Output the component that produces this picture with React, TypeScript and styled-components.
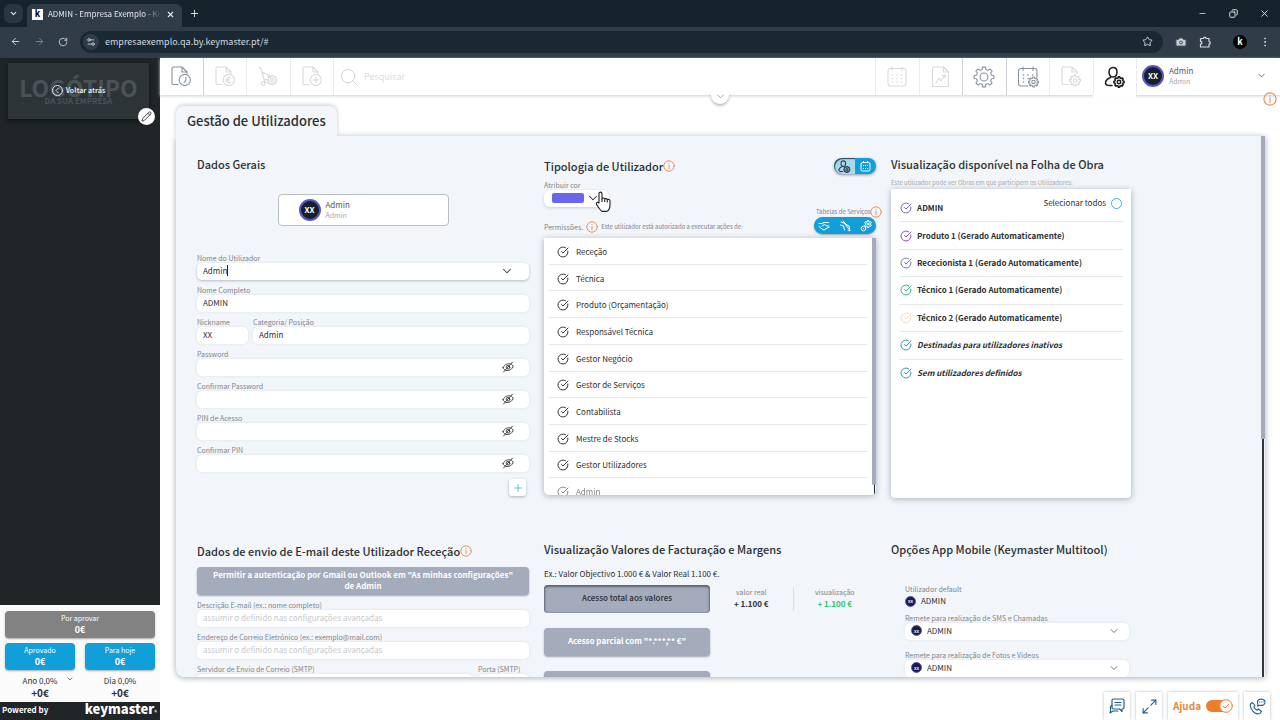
import { ReactNode, useState } from "react";
import styled, { createGlobalStyle, css } from "styled-components";
import {
  ArrowLeft, ArrowRight, Camera, ChevronDown, CircleCheckBig, Copy, EllipsisVertical,
  Maximize2, Minus, Pencil, Plus, RotateCw, Search, Settings2, Star, X,
} from "lucide-react";

const color = {
  text: "#2b2f33",
  label: "#7d838a",
  muted: "#a3a8ae",
  line: "#e6e8ea",
  blue: "#119fda",
  navy: "#1f5f8f",
  orange: "#e8925f",
  gray: "#a4abbb",
  panel: "#f2f6fa",
  black: "#202528",
};

const permissions = [
  "Receção",
  "Técnica",
  "Produto (Orçamentação)",
  "Responsável Técnica",
  "Gestor Negócio",
  "Gestor de Serviços",
  "Contabilista",
  "Mestre de Stocks",
  "Gestor Utilizadores",
  "Admin",
];

const viewers = [
  { name: "ADMIN", tint: "#6c69b5" },
  { name: "Produto 1 (Gerado Automaticamente)", tint: "#9450a8" },
  { name: "Rececionista 1 (Gerado Automaticamente)", tint: "#7276c4" },
  { name: "Técnico 1 (Gerado Automaticamente)", tint: "#2fb98c" },
  { name: "Técnico 2 (Gerado Automaticamente)", tint: "#f0dcc2" },
  { name: "Destinadas para utilizadores inativos", tint: "#2a9fb0", italic: true },
  { name: "Sem utilizadores definidos", tint: "#2a9fb0", italic: true },
];

const secrets = ["Password", "Confirmar Password", "PIN de Acesso", "Confirmar PIN"];

/* ---------- icons ---------- */

const gear = (cx: number, cy: number, outer: number, inner: number, teeth = 8) => {
  const step = (Math.PI * 2) / teeth;
  const points: string[] = [];
  for (let i = 0; i < teeth; i++) {
    const a = i * step - Math.PI / 2;
    [[-0.3, inner], [-0.2, outer], [0.2, outer], [0.3, inner]].forEach(([k, r]) => {
      points.push(`${(cx + Math.cos(a + k * step) * r).toFixed(2)} ${(cy + Math.sin(a + k * step) * r).toFixed(2)}`);
    });
  }
  return `M${points.join("L")}Z`;
};

const Svg = ({ w, h, vb, children, sw = 1 }: { w: number; h: number; vb?: string; children: ReactNode; sw?: number }) => (
  <svg width={w} height={h} viewBox={vb ?? `0 0 ${w} ${h}`} fill="none" stroke="currentColor" strokeWidth={sw}
    strokeLinecap="round" strokeLinejoin="round" aria-hidden="true">
    {children}
  </svg>
);

const DocIcon = ({ kind }: { kind: "clock" | "euro" | "plus" | "gear" }) => (
  <Svg w={20} h={21} sw={1.1}>
    <path d="M7 18.5H2.2A1.2 1.2 0 0 1 1 17.3V2.2A1.2 1.2 0 0 1 2.2 1H11l5 5v1.5M11 1v5h5" />
    {kind === "gear" ? (
      <>
        <path d={gear(14, 14.5, 5.5, 4.2)} />
        <circle cx="14" cy="14.5" r="1.8" />
      </>
    ) : (
      <circle cx="13.8" cy="14" r="5.6" />
    )}
    {kind === "clock" && <path d="M14.8 11.2v3.3L13 16.3" />}
    {kind === "euro" && <path d="M15.8 12a2.6 2.6 0 1 0 0 4.2M11 13.5h3M11 14.8h3" />}
    {kind === "plus" && <path d="M13.8 11v6M10.8 14h6" />}
  </Svg>
);

const CartIcon = () => (
  <Svg w={20} h={21} sw={1.1}>
    <path d="M1 1.5 3 2.5l4 14M4.5 8l1-1.5 2 1.500 4.500 1.500.5 2M6 14l3-.5M9 16.500H7" />
    <circle cx="5" cy="17.5" r="1.800" />
    <path d={gear(14, 14, 4.8, 3.7)} />
    <circle cx="14" cy="14" r="1.6" />
  </Svg>
);

const CalendarIcon = ({ withGear }: { withGear?: boolean }) => (
  <Svg w={22} h={22} sw={1.1}>
    <path d={withGear
      ? "M10.500 20H4a2.500 2.500 0 0 1-2.500-2.500V5A2.500 2.500 0 0 1 4 2.500h13.500A2.500 2.500 0 0 1 20 5v6"
      : "M4.500 2.500h13A2.500 2.500 0 0 1 20 5v12.500a2.500 2.500 0 0 1-2.500 2.500h-13A2.500 2.500 0 0 1 2 17.500V5a2.500 2.500 0 0 1 2.500-2.500Z"} />
    <path d="M6 1v3.500M16 1v3.500" />
    <path strokeWidth="1.6" d="M6.500 9h.1M11 9h.1M15.500 9h.1M6.500 12.500h.1M11 12.500h.1M6.500 16h.1" />
    {withGear ? (
      <>
        <path d={gear(16.5, 16, 5, 3.9)} />
        <circle cx="16.5" cy="16" r="1.7" />
      </>
    ) : (
      <path strokeWidth="1.6" d="M15.500 12.500h.1M11 16h.1M15.500 16h.1" />
    )}
  </Svg>
);

const ReportIcon = () => (
  <Svg w={20} h={22} sw={1.1}>
    <path d="M2.5 1h10l5 5v13.500a1 1 0 0 1-1 1h-14a1 1 0 0 1-1-1V2a1 1 0 0 1 1-1ZM12.500 1v5h5M5 17l3-5 2 3 4-6M11 9.500l3-.5.5 3" />
  </Svg>
);

const GearIcon = () => (
  <Svg w={22} h={22} sw={1.1}>
    <path d={gear(11, 11, 10, 7.7)} />
    <circle cx="11" cy="11" r="4" />
  </Svg>
);

const UserGearIcon = ({ size = 22, sw = 1.5 }: { size?: number; sw?: number }) => (
  <Svg w={size} h={size} vb="0 0 22 22" sw={sw}>
    <path d="M9 1.500c2.600 0 4 1.900 4 4.600S11.500 11 9 11 5 8.800 5 6.100 6.400 1.500 9 1.500ZM6.500 11.500C3 13 1.500 14 1.500 17c0 1.600 1.500 2.500 4.500 2.500h2" />
    <path d={gear(15, 16, 5.2, 4.1)} />
    <circle cx="15" cy="16" r="1.7" />
  </Svg>
);

const EyeOffIcon = () => (
  <Svg w={12} h={12}>
    <path d="M1 6.500C2.500 3.500 5 2.500 7.500 2.800c1.600.2 3 .8 3.700 2.200C10.500 8 8 9.500 5 9.500 3 9.500 1.500 8.500 1 6.500Z" />
    <circle cx="6" cy="6.2" r="1.8" />
    <path d="M10.500 1 1.500 11" />
  </Svg>
);

const InfoIcon = ({ size = 12 }: { size?: number }) => (
  <Svg w={size} h={size} vb="0 0 12 12">
    <circle cx="6" cy="6" r="5.200" />
    <path d="M6 5.300v3.400M6 3.300v.2" />
  </Svg>
);

const PuzzleIcon = () => (
  <Svg w={12} h={12} sw={1.2}>
    <path d="M1.500 2.500h3a1.300 1.300 0 0 1 2.600 0h2.900v3a1.300 1.300 0 0 1 0 2.600v2.900H1.500V8.200a1.400 1.400 0 0 0 0-2.800Z" />
  </Svg>
);

const ChatIcon = () => (
  <Svg w={16} h={16} sw={1.2}>
    <path d="M4.500 1h9A1.500 1.500 0 0 1 15 2.500v7a1.500 1.500 0 0 1-1.500 1.500H13v2.500L10.500 11h-6A1.500 1.500 0 0 1 3 9.500v-7A1.500 1.500 0 0 1 4.500 1Z" />
    <path d="M6 4.500h6M6 7h6M3 7.500l-1.500 1v4L1 15l3-2h5" />
  </Svg>
);

const PhoneIcon = () => (
  <Svg w={17} h={17} sw={1.1}>
    <path d="M1.500 6 3.500 4.500l2.500 3L4.800 9c.5 1.500 1.700 2.700 3.200 3.200L9.500 11l3 2.500-1.500 2c-2 .8-5 0-7-2.200S.8 8 1.500 6Z" />
    <path d="M8.500 8 9 6.300C7.500 4 9 1.200 12 1c2.500 0 4.200 1.500 4 3.500-.2 2.200-2.500 3.300-5 2.700ZM10.500 4h.1M12.300 4h.1M14.100 4h.1" />
  </Svg>
);

const HandIcon = () => (
  <svg width="18" height="22" viewBox="0 0 18 22" fill="#fff" stroke="#222" strokeWidth="1.1" strokeLinejoin="round" aria-hidden="true">
    <path d="M5 12V2.500C5 .700 8 .700 8 2.500V8c.5-1.500 2.500-1.200 2.700.3.600-1.200 2.500-.8 2.600.6.800-1 2.700-.6 2.700 1v4c0 3.500-1.500 5.500-3 6.500H8c-2-1-3-3.500-5.500-7-.9-1.800 1.200-2.600 2.500-1.400Z" />
    <path d="M8 8v3M10.700 8.500V11M13.300 9.300V11.500" />
  </svg>
);

const HandshakeIcon = () => (
  <Svg w={12} h={12}>
    <path d="M1 3.500h3l2-1h4.500M1 6.500l3 2.500 2 1 4-2.500h1M4 6l2.500-1.500L9 6h2" />
  </Svg>
);

const ToolsIcon = () => (
  <Svg w={12} h={12}>
    <path d="m2 2 3 1 5 6M4 1l4 4M1.500 5l3 1 1 4M6 4l4 2 1 5-2-1" />
  </Svg>
);

const GearsIcon = () => (
  <Svg w={12} h={12}>
    <path d={gear(8, 4, 3.5, 2.6, 6)} />
    <circle cx="8" cy="4" r="1" />
    <circle cx="3.5" cy="8.5" r="2.3" />
    <path d="M3.500 8.500h.1" />
  </Svg>
);

/* ---------- page ---------- */

const App = () => (
  <Page>
    <GlobalStyle />
    <Browser />
    <Body>
      <Sidebar />
      <Main>
        <TopBar />
        <TabTitle>Gestão de Utilizadores</TabTitle>
        <Panel>
          <PanelGrid>
            <GeneralData />
            <UserType />
            <SheetVisibility />
            <EmailData />
            <Billing />
            <MobileOptions />
          </PanelGrid>
          <ScrollTrack />
        </Panel>
        <Footer />
      </Main>
    </Body>
  </Page>
);

const Browser = () => (
  <>
    <TabStrip>
      <TabSearch aria-label="Pesquisar separadores"><ChevronDown size={9} strokeWidth={3} /></TabSearch>
      <BrowserTab>
        <Favicon>k</Favicon>
        <span>ADMIN - Empresa Exemplo - Keymaster</span>
        <X size={9} strokeWidth={3} />
      </BrowserTab>
      <ChromeButton aria-label="Novo separador"><Plus size={11} /></ChromeButton>
      <WindowButtons>
        <ChromeButton aria-label="Minimizar"><Minus size={9} /></ChromeButton>
        <ChromeButton aria-label="Restaurar"><Restore><Copy size={9} strokeWidth={2.5} /></Restore></ChromeButton>
        <ChromeButton aria-label="Fechar"><X size={11} /></ChromeButton>
      </WindowButtons>
    </TabStrip>
    <AddressRow>
      <ChromeButton aria-label="Retroceder"><ArrowLeft size={11} /></ChromeButton>
      <ChromeButton aria-label="Avançar" $dim><ArrowRight size={11} /></ChromeButton>
      <ChromeButton aria-label="Recarregar"><RotateCw size={10} /></ChromeButton>
      <AddressBar>
        <SiteInfo><Settings2 size={10} /></SiteInfo>
        <input aria-label="Endereço" defaultValue="empresaexemplo.qa.by.keymaster.pt/#" />
        <Star size={11} />
      </AddressBar>
      <ChromeIcons>
        <Camera size={12} fill="#c9ced2" color="#4a555e" />
        <PuzzleIcon />
        <BrandDot>k</BrandDot>
        <EllipsisVertical size={12} />
      </ChromeIcons>
    </AddressRow>
  </>
);

const Sidebar = () => (
  <Side>
    <LogoCard>
      <strong>LOGÓTIPO</strong>
      <small>DA SUA EMPRESA</small>
      <BackButton>
        <Svg w={11} h={11}><circle cx="5.500" cy="5.500" r="5" /><path d="M6.500 3 4 5.500 6.500 8" /></Svg>
        Voltar atrás
      </BackButton>
      <EditButton aria-label="Editar logótipo"><Pencil size={11} strokeWidth={2} /></EditButton>
    </LogoCard>
    <Totals>
      <TotalButton $wide>Por aprovar<b>0€</b></TotalButton>
      <TotalButton>Aprovado<b>0€</b></TotalButton>
      <TotalButton>Para hoje<b>0€</b></TotalButton>
      <Delta><span>Ano 0,0%<ChevronDown size={8} /></span><b>+0€</b></Delta>
      <Delta><span>Dia 0,0%</span><b>+0€</b></Delta>
    </Totals>
    <Powered>Powered by<strong>keymaster<i>®</i></strong></Powered>
  </Side>
);

const UserBadge = () => (
  <Badge>
    <Avatar>XX</Avatar>
    <div>Admin<small>Admin</small></div>
  </Badge>
);

const TopBar = () => (
  <Bar>
    <ToolGroup $columns={4}>
      <Tool aria-label="Histórico" $on><DocIcon kind="clock" /></Tool>
      <Tool aria-label="Orçamentos"><DocIcon kind="euro" /></Tool>
      <Tool aria-label="Stocks"><CartIcon /></Tool>
      <Tool aria-label="Nova obra"><DocIcon kind="plus" /></Tool>
    </ToolGroup>
    <SearchBox>
      <Search size={20} strokeWidth={1.2} />
      <input aria-label="Pesquisar" placeholder="Pesquisar" />
    </SearchBox>
    <ToolGroup $columns={6}>
      <Tool aria-label="Calendário" $end><CalendarIcon /></Tool>
      <Tool aria-label="Relatórios" $end><ReportIcon /></Tool>
      <Tool aria-label="Configurações" $end $on><GearIcon /></Tool>
      <Tool aria-label="Configurar calendário" $end $on><CalendarIcon withGear /></Tool>
      <Tool aria-label="Configurar documentos" $end><DocIcon kind="gear" /></Tool>
      <Tool aria-label="Utilizadores" $end $active><UserGearIcon /></Tool>
    </ToolGroup>
    <Account>
      <UserBadge />
      <ChevronDown size={11} strokeWidth={1.5} />
    </Account>
    <PullTab aria-label="Expandir"><ChevronDown size={11} strokeWidth={1.8} /></PullTab>
    <PageInfo aria-label="Informação"><InfoIcon size={14} /></PageInfo>
  </Bar>
);

const GeneralData = () => (
  <section>
    <Title>Dados Gerais</Title>
    <UserCard><UserBadge /></UserCard>
    <Fields>
      <Field>
        <span>Nome do Utilizador</span>
        <Box $focus>
          <GrowInput defaultValue="Admin" />
          <Caret />
          <ChevronDown size={14} strokeWidth={1.8} />
        </Box>
      </Field>
      <Field>
        <span>Nome Completo</span>
        <Box><input defaultValue="ADMIN" /></Box>
      </Field>
      <FieldRow>
        <Field $width={51}>
          <span>Nickname</span>
          <Box><input defaultValue="XX" /></Box>
        </Field>
        <Field>
          <span>Categoria/ Posição</span>
          <Box><input defaultValue="Admin" /></Box>
        </Field>
      </FieldRow>
      {secrets.map((label) => (
        <Field key={label}>
          <span>{label}</span>
          <Box>
            <input type="password" />
            <EyeOffIcon />
          </Box>
        </Field>
      ))}
    </Fields>
    <AddButton aria-label="Adicionar"><Plus size={12} strokeWidth={1.8} /></AddButton>
  </section>
);

const UserType = () => {
  const [checked, setChecked] = useState<string[]>(permissions);
  const toggle = (name: string) =>
    setChecked((list) => (list.includes(name) ? list.filter((n) => n !== name) : [...list, name]));

  return (
    <section>
      <TitleRow>
        <Title>Tipologia de Utilizador</Title>
        <InfoIcon />
        <ModeSwitch>
          <button aria-label="Utilizador" aria-pressed="true"><UserGearIcon size={13} sw={1.8} /></button>
          <button aria-label="Calendário">
            <Svg w={11} h={11}>
              <rect x="1" y="1.500" width="9" height="8.500" rx="1.500" />
              <path d="M3.500.5v1M7.500.5v1M3.500 4.500h.1M5.500 4.500h.1M7.500 4.500h.1M3.500 7.500h.1M5.500 7.500h.1M7.500 7.500h.1" />
            </Svg>
          </button>
        </ModeSwitch>
      </TitleRow>
      <Tools>
        <div>
          <ColorField>
            <span id="cor">Atribuir cor</span>
            <ColorButton aria-labelledby="cor">
              <i />
              <ChevronDown size={14} strokeWidth={1.8} />
            </ColorButton>
            <Pointer><HandIcon /></Pointer>
          </ColorField>
          <Hint>Permissões. <InfoIcon /> <small>Este utilizador está autorizado a executar ações de:</small></Hint>
        </div>
        <ServiceTables>
          <span>Tabelas de Serviços<InfoIcon /></span>
          <ServicePill>
            <button aria-label="Serviços"><HandshakeIcon /></button>
            <button aria-label="Mão de obra"><ToolsIcon /></button>
            <button aria-label="Peças"><GearsIcon /></button>
          </ServicePill>
        </ServiceTables>
      </Tools>
      <PermissionCard>
        <PermissionList>
          {permissions.map((name) => (
            <li key={name}>
              <CheckLabel>
                <input type="checkbox" checked={checked.includes(name)} onChange={() => toggle(name)} />
                <CircleCheckBig size={12} />
                {name}
              </CheckLabel>
            </li>
          ))}
        </PermissionList>
        <ListTrack />
      </PermissionCard>
    </section>
  );
};

const SheetVisibility = () => (
  <section>
    <Title>Visualização disponível na Folha de Obra</Title>
    <Note>Este utilizador pode ver Obras em que participem os Utilizadores:</Note>
    <ViewerCard>
      <ViewerList>
        {viewers.map((viewer, i) => (
          <li key={viewer.name}>
            <CheckLabel $tint={viewer.tint} $bold $italic={viewer.italic}>
              <input type="checkbox" defaultChecked />
              <CircleCheckBig size={12} />
              {viewer.name}
            </CheckLabel>
            {i === 0 && (
              <SelectAll>Selecionar todos<input type="checkbox" /></SelectAll>
            )}
          </li>
        ))}
      </ViewerList>
    </ViewerCard>
  </section>
);

const EmailData = () => (
  <section>
    <TitleRow>
      <Title>Dados de envio de E-mail deste Utilizador Receção</Title>
      <InfoIcon />
    </TitleRow>
    <AuthButton>Permitir a autenticação por Gmail ou Outlook em "As minhas configurações" de Admin</AuthButton>
    <Fields>
      <Field>
        <span>Descrição E-mail (ex.: nome completo)</span>
        <Box><input placeholder="assumir o definido nas configurações avançadas" /></Box>
      </Field>
      <Field>
        <span>Endereço de Correio Eletrónico (ex.: exemplo@mail.com)</span>
        <Box><input placeholder="assumir o definido nas configurações avançadas" /></Box>
      </Field>
      <FieldRow>
        <Field>
          <span>Servidor de Envio de Correio (SMTP)</span>
          <Box><input /></Box>
        </Field>
        <Field $width={51}>
          <span>Porta (SMTP)</span>
          <Box><input /></Box>
        </Field>
      </FieldRow>
    </Fields>
  </section>
);

const Billing = () => (
  <section>
    <Title>Visualização Valores de Facturação e Margens</Title>
    <Example>Ex.: Valor Objectivo 1.000 € &amp; Valor Real 1.100 €.</Example>
    <AccessRows>
      <AccessRow>
        <AccessButton $pressed>Acesso total aos valores</AccessButton>
        <Value>valor real<b>+ 1.100 €</b></Value>
        <Value $green>visualização<b>+ 1.100 €</b></Value>
      </AccessRow>
      <AccessRow><AccessButton>Acesso parcial com "*.***,** €"</AccessButton></AccessRow>
      <AccessRow><AccessButton aria-label="Sem acesso" /></AccessRow>
    </AccessRows>
  </section>
);

const MobileOptions = () => (
  <section>
    <Title>Opções App Mobile (Keymaster Multitool)</Title>
    <MobileFields>
      <DefaultUser>
        <span>Utilizador default</span>
        <div><Avatar $small>XX</Avatar>ADMIN</div>
      </DefaultUser>
      {["Remete para realização de SMS e Chamadas", "Remete para realização de Fotos e Videos"].map((label) => (
        <Field key={label}>
          <span>{label}</span>
          <Box $select>
            <Avatar $small>XX</Avatar>
            <select><option>ADMIN</option></select>
            <ChevronDown size={12} strokeWidth={1.5} />
          </Box>
        </Field>
      ))}
    </MobileFields>
  </section>
);

const Footer = () => (
  <Foot>
    <FootButton aria-label="Mensagens"><ChatIcon /></FootButton>
    <FootButton aria-label="Ecrã inteiro"><Maximize2 size={17} strokeWidth={1.6} /></FootButton>
    <Help>
      Ajuda
      <input type="checkbox" defaultChecked />
      <Svg w={27} h={14}>
        <rect x="0" y="1" width="26" height="12" rx="6" fill="#ee7d30" stroke="none" />
        <circle cx="20" cy="7" r="6.3" fill="#fff" stroke="#ee7d30" />
        <path d="m17 7 2 2 4-4" stroke="#ee7d30" />
      </Svg>
    </Help>
    <FootButton aria-label="Contactos"><PhoneIcon /></FootButton>
  </Foot>
);

/* ---------- styles ---------- */

const GlobalStyle = createGlobalStyle`
  * { box-sizing: border-box; }
  body {
    margin: 0;
    background: #fff;
    color: ${color.text};
    font: 9px/12px "Noto Sans CJK SC", "Noto Sans", sans-serif;
  }
  button, input, select { font: inherit; color: inherit; border: 0; padding: 0; background: none; }
  input, select { min-width: 0; outline: 0; appearance: none; }
  button { cursor: pointer; }
  svg { display: block; flex: none; }
`;

const center = css`
  display: flex;
  align-items: center;
  justify-content: center;
`;

const Page = styled.div`
  height: 100vh;
  display: flex;
  flex-direction: column;
  overflow: hidden;
`;

const Body = styled.div`
  flex: 1;
  min-height: 0;
  display: flex;
`;

const TabStrip = styled.div`
  display: flex;
  align-items: center;
  height: 27px;
  padding-left: 4px;
  background: #14232c;
  color: #e3e8eb;
`;

const TabSearch = styled.button`
  ${center}
  width: 19px;
  height: 19px;
  border-radius: 6px;
  background: #2a3640;
`;

const BrowserTab = styled.div`
  display: flex;
  align-items: center;
  align-self: flex-end;
  gap: 5px;
  width: 155px;
  height: 23px;
  margin-left: 4px;
  padding: 0 7px 3px 5px;
  border-radius: 6px 6px 0 0;
  background: #303d49;
  font-size: 8px;

  span {
    flex: 1;
    overflow: hidden;
    white-space: nowrap;
    mask-image: linear-gradient(90deg, #000 85%, transparent);
  }
`;

const Favicon = styled.b`
  ${center}
  width: 11px;
  height: 11px;
  background: #fff;
  color: #000;
  font-size: 9px;
`;

const ChromeButton = styled.button<{ $dim?: boolean }>`
  ${center}
  width: 24px;
  height: 24px;
  opacity: ${({ $dim }) => ($dim ? 0.45 : 1)};
`;

const Restore = styled.span`
  transform: rotate(90deg) scaleX(-1) rotate(90deg);
`;

const WindowButtons = styled.div`
  display: flex;
  gap: 7px;
  margin-left: auto;
  padding-right: 4px;
`;

const AddressRow = styled.div`
  display: flex;
  align-items: center;
  height: 31px;
  padding: 0 0 2px 3px;
  background: #303d49;
  color: #d3dade;
`;

const AddressBar = styled.div`
  flex: 1;
  display: flex;
  align-items: center;
  gap: 6px;
  height: 22px;
  margin-left: 5px;
  padding: 0 10px 0 3px;
  border-radius: 11px;
  background: #1a2833;

  input { flex: 1; }
`;

const SiteInfo = styled.span`
  ${center}
  width: 16px;
  height: 16px;
  border-radius: 50%;
  background: #303d49;
`;

const ChromeIcons = styled.div`
  display: flex;
  align-items: center;
  gap: 12px;
  padding: 0 9px 0 12px;
`;

const BrandDot = styled.b`
  ${center}
  width: 14px;
  height: 14px;
  margin-left: 10px;
  border-radius: 50%;
  background: #000;
  color: #fff;
`;

const Side = styled.aside`
  width: 160px;
  display: flex;
  flex-direction: column;
  justify-content: space-between;
  background: ${color.black};
`;

const LogoCard = styled.div`
  position: relative;
  display: flex;
  flex-direction: column;
  align-items: center;
  margin: 5px 11px 0 8px;
  padding: 15px 0 14px;
  background: #2d3438;
  color: #4b5257;
  box-shadow: 0 2px 4px #111;

  strong { font-size: 23px; line-height: 19px; }
  small { font-size: 8px; line-height: 8px; font-weight: 700; }
`;

const BackButton = styled.button`
  ${center}
  position: absolute;
  inset: 0;
  gap: 3px;
  width: 100%;
  padding-bottom: 2px;
  color: #dfe6ea;
  font-size: 7px;
  font-weight: 700;
`;

const EditButton = styled.button`
  ${center}
  position: absolute;
  right: -6px;
  bottom: -6px;
  width: 17px;
  height: 17px;
  border-radius: 50%;
  background: #fff;
  color: #333;
`;

const Totals = styled.div`
  display: grid;
  grid-template-columns: 1fr 1fr;
  gap: 5px 10px;
  margin-top: auto;
  padding: 6px 5px 3px;
  background: #fbfbfc;
`;

const TotalButton = styled.button<{ $wide?: boolean }>`
  grid-column: ${({ $wide }) => ($wide ? "span 2" : "auto")};
  height: 27px;
  padding-bottom: 2px;
  border-radius: 4px;
  background: ${({ $wide }) => ($wide ? "#828282" : color.blue)};
  box-shadow: 0 1px 2px #0005;
  color: #fff;
  font-size: 7px;
  line-height: 12px;

  b { display: block; font-size: 9px; }
`;

const Delta = styled.div`
  display: flex;
  flex-direction: column;
  align-items: center;
  font-size: 8px;
  line-height: 12px;

  span { position: relative; line-height: 11px; }
  svg { position: absolute; left: 43px; top: 0; }
  b { font-size: 10px; line-height: 13px; }
`;

const Powered = styled.div`
  display: flex;
  align-items: center;
  justify-content: space-between;
  height: 18px;
  padding: 0 3px 2px 2px;
  background: ${color.black};
  color: #fff;
  font-size: 8px;
  font-weight: 700;

  strong { font-size: 13px; }
  i { font-size: 5px; font-style: normal; }
`;

const Main = styled.main`
  flex: 1;
  min-width: 0;
  display: flex;
  flex-direction: column;
`;

const Bar = styled.header`
  position: relative;
  display: flex;
  height: 37px;
  margin-bottom: 11px;
  box-shadow: 0 1px 3px #c9cdd4;
`;

const ToolGroup = styled.div<{ $columns: number }>`
  display: grid;
  grid-template-columns: repeat(${({ $columns }) => $columns}, 1fr);
  width: ${({ $columns }) => ($columns === 4 ? 174 : 261)}px;
`;

const Tool = styled.button<{ $on?: boolean; $active?: boolean; $end?: boolean }>`
  ${center}
  border: 0 solid ${({ $on }) => ($on ? "#cfd3d9" : "#e9ebee")};
  border-width: ${({ $end }) => ($end ? "0 0 0 1px" : "0 1px 0 0")};
  color: ${({ $on, $active }) => ($active ? "#1c1c1c" : $on ? "#87939f" : "#d6d9dd")};
  background: #fff;
  box-shadow: ${({ $active }) => ($active ? "0 3px 0 #fff" : "none")};
`;

const SearchBox = styled.div`
  flex: 1;
  display: flex;
  align-items: center;
  gap: 5px;
  padding-left: 5px;
  color: #cfd3d7;

  input { flex: 1; line-height: 14px; }
  input::placeholder { color: #d9dcdf; }
`;

const Account = styled.div`
  display: flex;
  align-items: center;
  justify-content: space-between;
  width: 144px;
  padding: 0 13px 2px 5px;
  border-left: 1px solid #e9ebee;
`;

const Badge = styled.div`
  display: flex;
  align-items: center;
  gap: 5px;
  color: #55595e;
  font-size: 8px;
  line-height: 11px;

  small { display: block; font-size: 7px; color: ${color.muted}; }
`;

const Avatar = styled.b<{ $small?: boolean }>`
  ${center}
  flex: none;
  width: ${({ $small }) => ($small ? 11 : 22)}px;
  height: ${({ $small }) => ($small ? 11 : 22)}px;
  border: ${({ $small }) => ($small ? 1 : 2)}px solid #5a55c4;
  border-radius: 50%;
  background: ${({ $small }) => ($small ? "#1b1b48" : "#16202c")};
  color: #fff;
  font-size: ${({ $small }) => ($small ? 4 : 8)}px;
  line-height: 8px;
`;

const PullTab = styled.button`
  ${center}
  position: absolute;
  top: 28px;
  left: 50%;
  width: 18px;
  height: 18px;
  margin-left: -9px;
  border-radius: 50%;
  background: #fff;
  box-shadow: 0 2px 3px #b9bec6;
  clip-path: inset(8px -4px -6px -4px);
  padding-top: 3px;
  color: #888f96;
`;

const PageInfo = styled.button`
  position: absolute;
  right: 3px;
  top: 34px;
  color: ${color.orange};
`;

const TabTitle = styled.h1`
  align-self: flex-start;
  z-index: 1;
  margin: 0 0 0 16px;
  padding: 6px 11px 6px;
  border-radius: 8px 8px 0 0;
  background: ${color.panel};
  box-shadow: 0 -1px 4px #c3c9d2;
  clip-path: inset(-6px -6px 0 -6px);
  font-size: 13px;
  line-height: 18px;
  font-weight: 500;
`;

const Panel = styled.div`
  flex: 1;
  min-height: 0;
  display: flex;
  margin: 0 15px 0 16px;
  border-radius: 0 0 0 8px;
  background: ${color.panel};
  box-shadow: 0 1px 6px #a5adba;
`;

const PanelGrid = styled.div`
  flex: 1;
  display: grid;
  grid-template-columns: repeat(3, minmax(0, 332px));
  align-content: start;
  gap: 43px 15px;
  padding: 20px 0 0 21px;
  overflow: hidden;
`;

const ScrollTrack = styled.div`
  width: 4px;
  background:
    linear-gradient(${color.gray}, ${color.gray}) 0 0 / 4px 56% no-repeat,
    linear-gradient(#33363a, #33363a) 1px 0 / 2px 100% no-repeat;
`;

const Title = styled.h2`
  margin: 0;
  padding-bottom: 2px;
  font-size: 11px;
  line-height: 16px;
  font-weight: 500;
  white-space: nowrap;
`;

const TitleRow = styled.div`
  display: flex;
  align-items: center;
  height: 22px;

  > svg { margin-bottom: 2px; color: ${color.orange}; }
`;

const ModeSwitch = styled.div`
  display: flex;
  margin: 0 0 2px auto;
  border-radius: 8px;
  overflow: hidden;
  background: ${color.blue};
  box-shadow: 0 1px 3px #0006;
  color: #fff;

  button { ${center} width: 21px; height: 16px; }
  button:first-child {
    background: #a9d8ee;
    color: #2b4452;
    border-radius: 8px 0 0 8px;
    box-shadow: inset 1px 1px 1px #23404f;
  }
`;

const UserCard = styled.div`
  width: 171px;
  height: 32px;
  margin: 20px auto 27px;
  padding: 4px 20px;
  border: 1px solid #b9bec6;
  border-radius: 4px;
  background: #fff;
`;

const Fields = styled.div`
  display: flex;
  flex-direction: column;
  gap: 5px;
`;

const FieldRow = styled.div`
  display: flex;
  gap: 5px;
`;

const Field = styled.label<{ $width?: number }>`
  display: block;
  flex: ${({ $width }) => ($width ? `0 0 ${$width}px` : "1 1 auto")};
  min-width: 0;

  > span {
    display: block;
    color: ${color.label};
    font-size: 7px;
    line-height: 10px;
    white-space: nowrap;
  }
`;

const Box = styled.div<{ $focus?: boolean; $select?: boolean }>`
  display: flex;
  align-items: center;
  height: 17px;
  padding: 0 ${({ $select }) => ($select ? 9 : 15)}px 2px 6px;
  border-radius: 5px;
  background: #fff;
  box-shadow: ${({ $focus }) => ($focus ? "0 1px 3px #b4bac4" : "0 0 3px #dde1e7")};
  color: #44484d;

  input, select { flex: 1; width: 0; height: 15px; color: ${color.text}; font-size: 8px; line-height: 15px; }
  input::placeholder { color: #c6c9cc; }
  ${Avatar} + select { margin-left: 5px; }
`;

const GrowInput = styled.input`
  && { flex: none; width: auto; field-sizing: content; }
`;

const Caret = styled.i`
  width: 1px;
  height: 11px;
  margin-right: auto;
  background: #222;
`;

const AddButton = styled.button`
  ${center}
  width: 17px;
  height: 17px;
  margin: 7px 3px 0 auto;
  border-radius: 3px;
  background: #fff;
  box-shadow: 0 1px 3px #a9b0bb;
  color: #4cc0c4;
`;

const Tools = styled.div`
  display: flex;
  justify-content: space-between;
  height: 60px;
  padding-top: 2px;
`;

const ColorField = styled.div`
  position: relative;
  width: 65px;
  color: ${color.label};
  font-size: 7px;
  line-height: 10px;
`;

const ColorButton = styled.button`
  display: flex;
  align-items: center;
  justify-content: space-between;
  width: 100%;
  height: 17px;
  padding: 0 9px 2px 8px;
  border-radius: 6px;
  background: #fff;
  box-shadow: 0 1px 3px #c9ced6;
  color: #333;

  i { width: 32px; height: 10px; border-radius: 2px; background: #6a68ea; }
`;

const Pointer = styled.span`
  position: absolute;
  left: 50px;
  top: 11px;
`;

const Hint = styled.p`
  display: flex;
  align-items: center;
  gap: 3px;
  margin: 14px 0 0;
  color: ${color.label};
  font-size: 7px;
  white-space: nowrap;

  svg { color: ${color.orange}; }
  small { font-size: 6px; }
`;

const ServiceTables = styled.div`
  padding-top: 26px;
  color: ${color.label};
  font-size: 6px;
  line-height: 11px;

  span { position: relative; display: block; padding-left: 2px; white-space: nowrap; }
  span svg { position: absolute; right: -6px; top: 0; color: ${color.orange}; }
`;

const ServicePill = styled.div`
  display: flex;
  justify-content: space-around;
  width: 62px;
  height: 17px;
  border-radius: 9px;
  background: ${color.blue};
  box-shadow: 0 1px 2px #0005;
  color: #fff;

  button { ${center} width: 16px; }
`;

const PermissionCard = styled.div`
  display: flex;
  height: 257px;
  border-radius: 0 0 5px 5px;
  overflow: hidden;
  background: #fff;
  box-shadow: 0 1px 6px #a5adba;
`;

const list = css`
  flex: 1;
  display: grid;
  margin: 0;
  list-style: none;

  li {
    display: flex;
    align-items: center;
    border-bottom: 1px solid ${color.line};
  }
`;

const PermissionList = styled.ul`
  ${list}
  height: 267px;
  padding: 0 5px;
  grid-template-rows: repeat(10, 1fr);

  li { padding: 2px 8px 0; }
  li:last-child { opacity: 0.6; }
`;

const ListTrack = styled.div`
  width: 4px;
  background:
    linear-gradient(${color.gray}, ${color.gray}) 0 0 / 4px 96% no-repeat,
    linear-gradient(#222, #222) 2px 0 / 1px 100% no-repeat;
`;

const CheckLabel = styled.label<{ $tint?: string; $bold?: boolean; $italic?: boolean }>`
  display: flex;
  align-items: center;
  gap: ${({ $bold }) => ($bold ? 5 : 7)}px;
  font-size: 8px;
  font-weight: ${({ $bold }) => ($bold ? 700 : 400)};
  font-style: ${({ $italic }) => ($italic ? "italic" : "normal")};
  white-space: nowrap;

  input { position: absolute; opacity: 0; }
  svg { color: ${({ $tint }) => $tint ?? "#33373b"}; }
`;

const Note = styled.p`
  margin: 4px 0 2px;
  color: ${color.muted};
  font-size: 6px;
  line-height: 9px;
`;

const ViewerCard = styled.div`
  width: 240px;
  height: 309px;
  padding: 6px 8px;
  border-radius: 0 0 4px 4px;
  background: #fff;
  box-shadow: 0 1px 6px #a5adba;
`;

const ViewerList = styled.ul`
  ${list}
  height: 192px;
  padding: 0;
  grid-template-rows: repeat(7, 1fr);

  li { justify-content: space-between; padding: 0 1px; }
  li:last-child { border: 0; }
`;

const SelectAll = styled.label`
  display: flex;
  align-items: center;
  align-self: flex-start;
  gap: 5px;
  padding-top: 2px;
  font-size: 8px;

  input {
    width: 11px;
    height: 11px;
    margin: 0;
    border: 1px solid #3fb3c4;
    border-radius: 50%;
  }
`;

const AuthButton = styled.button`
  display: block;
  width: 100%;
  height: 28px;
  margin: 4px 0 5px;
  padding: 0 12px 2px;
  border-radius: 4px;
  background: ${color.gray};
  box-shadow: 0 1px 2px #0005;
  color: #fff;
  font-size: 8px;
  line-height: 11px;
  font-weight: 700;
`;

const Example = styled.p`
  margin: 8px 0 4px;
  font-size: 8px;
  line-height: 14px;
`;

const AccessRows = styled.div`
  display: flex;
  flex-direction: column;
  gap: 15px;
`;

const AccessRow = styled.div`
  display: flex;
  align-items: center;
`;

const AccessButton = styled.button<{ $pressed?: boolean }>`
  width: 166px;
  height: 28px;
  padding-bottom: 2px;
  border-radius: 4px;
  background: ${color.gray};
  box-shadow: ${({ $pressed }) => ($pressed ? "inset 0 1px 2px 1px #5d6472" : "0 1px 2px #0005")};
  color: ${({ $pressed }) => ($pressed ? color.text : "#fff")};
  font-size: 8px;
  font-weight: ${({ $pressed }) => ($pressed ? 500 : 700)};
`;

const Value = styled.div<{ $green?: boolean }>`
  flex: 1;
  padding-bottom: 2px;
  border-left: ${({ $green }) => ($green ? "1px solid #dcdfe4" : "0")};
  color: ${color.label};
  font-size: 7px;
  line-height: 11px;
  text-align: center;

  b { display: block; color: ${({ $green }) => ($green ? "#2cc46c" : color.text)}; font-size: 8px; }
`;

const MobileFields = styled.div`
  display: flex;
  flex-direction: column;
  gap: 10px;
  width: 238px;
  padding: 25px 0 0 14px;
`;

const DefaultUser = styled.div`
  margin-bottom: -5px;
  color: ${color.text};
  font-size: 8px;
  line-height: 12px;

  span { display: block; color: ${color.label}; font-size: 7px; line-height: 10px; }
  div { display: flex; align-items: center; gap: 5px; height: 14px; }
`;

const Foot = styled.footer`
  display: flex;
  justify-content: flex-end;
  gap: 6px;
  padding: 15px 10px 0 0;
  height: 43px;
`;

const FootButton = styled.button`
  ${center}
  width: 26px;
  background: #fff;
  box-shadow: 0 0 3px #b9bfc8;
  color: ${color.navy};
`;

const Help = styled.label`
  ${center}
  gap: 5px;
  width: 70px;
  background: #fff;
  box-shadow: 0 0 3px #b9bfc8;
  color: #e58a3c;
  font-size: 10px;
  font-weight: 700;

  input { position: absolute; opacity: 0; }
`;

export default App;
